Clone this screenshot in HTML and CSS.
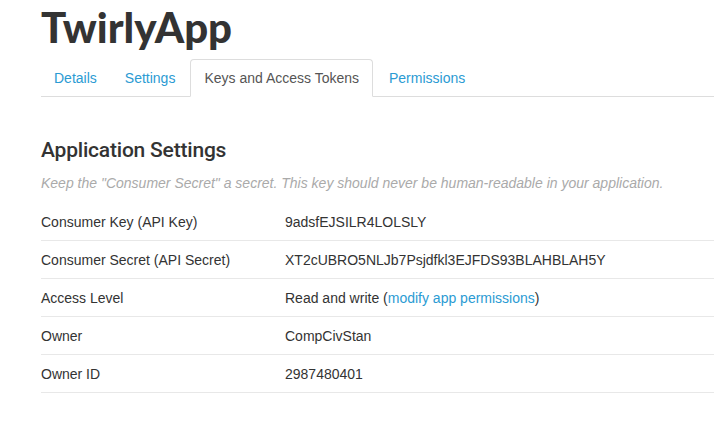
FILE: index.html
```html
<!DOCTYPE html>
<html>
<head>
<meta charset="utf-8">
<link rel="stylesheet" href="styles.css">
</head>
<body>
<div class="page">
  <h1 class="app-title">TwirlyApp</h1>
  <ul class="tabs">
    <li class="tab"><a href="#">Details</a></li>
    <li class="tab"><a href="#">Settings</a></li>
    <li class="tab active"><a href="#">Keys and Access Tokens</a></li>
    <li class="tab"><a href="#">Permissions</a></li>
  </ul>
  <section class="settings">
    <h2 class="section-title">Application Settings</h2>
    <p class="hint">Keep the "Consumer Secret" a secret. This key should never be human-readable in your application.</p>
    <div class="table">
      <div class="row"><span class="label">Consumer Key (API Key)</span><span class="value">9adsfEJSILR4LOLSLY</span></div>
      <div class="row"><span class="label">Consumer Secret (API Secret)</span><span class="value">XT2cUBRO5NLJb7Psjdfkl3EJFDS93BLAHBLAH5Y</span></div>
      <div class="row"><span class="label">Access Level</span><span class="value">Read and write (<a href="#">modify app permissions</a>)</span></div>
      <div class="row"><span class="label">Owner</span><span class="value">CompCivStan</span></div>
      <div class="row"><span class="label">Owner ID</span><span class="value">2987480401</span></div>
    </div>
  </section>
</div>
</body>
</html>
```
FILE: styles.css
```css
* { box-sizing: border-box; }
html, body { margin: 0; padding: 0; background: #fff; }
body {
  font-family: "Liberation Sans", Arial, sans-serif;
  font-size: 14px;
  color: #333;
}
a { color: #2b9bd3; text-decoration: none; }
.page { padding: 0 0 0 41px; }
.app-title {
  margin: 0;
  padding-top: 2px;
  font-family: "Lato", "Liberation Sans", sans-serif;
  font-weight: 900;
  font-size: 42px;
  line-height: 50px;
  color: #333;
  letter-spacing: 0;
}
.tabs {
  list-style: none;
  margin: 7px 0 0 0;
  padding: 0;
  display: flex;
  border-bottom: 1px solid #ddd;
}
.tab { margin-right: 1px; margin-bottom: -1px; }
.tab a {
  display: block;
  padding: 9px 13px 9px 12px;
  line-height: 18px;
  border: 1px solid transparent;
  border-radius: 4px 4px 0 0;
}
.tab.active a {
  color: #555;
  background: #fff;
  padding: 9px 13px 9px 13px;
  border-color: #ddd #ddd transparent #ddd;
}
.tab.active + .tab a { padding-left: 14px; }
.settings { padding-top: 40px; }
.section-title {
  margin: 0;
  font-family: "Roboto", "Liberation Sans", sans-serif;
  font-weight: 500;
  font-size: 21px;
  line-height: 26px;
  color: #333;
  letter-spacing: -0.2px;
}
.hint {
  margin: 10px 0 10px 0;
  font-style: italic;
  font-size: 14px;
  line-height: 20px;
  color: #aaa;
}
.table { display: flex; flex-direction: column; }
.row {
  display: grid;
  grid-template-columns: 244px 1fr;
  height: 38px;
  align-items: center;
  border-bottom: 1px solid #e8e8e8;
}
```
